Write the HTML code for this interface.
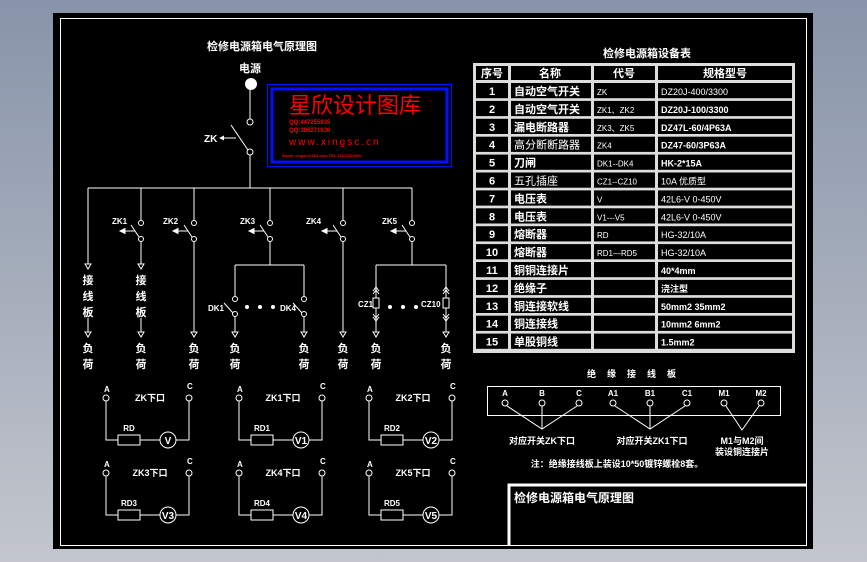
<!DOCTYPE html>
<html><head><meta charset="utf-8"><style>
html,body{margin:0;padding:0;width:867px;height:562px;overflow:hidden;background:linear-gradient(#8794a9,#c3c6cd);}
svg{position:absolute;left:0;top:0}
text{font-family:"Liberation Sans","Noto Sans CJK SC",sans-serif;fill:#fff;font-weight:bold}
</style></head><body>
<svg width="867" height="562" viewBox="0 0 867 562">
<defs>
<g id="arr"><path d="M-3,-3 L3,-3 L0,2 Z" fill="none" stroke="#fff" stroke-width="1"/></g>
<g id="sw" stroke="#fff" fill="none" stroke-width="1">
<circle cx="0" cy="0" r="2.5"/><circle cx="0" cy="16" r="2.5"/>
<line x1="-10" y1="2" x2="-2" y2="14"/><line x1="-20" y1="8" x2="-6" y2="8"/>
<path d="M-21,8 L-16,5.5 L-16,10.5Z" fill="#fff"/>
</g>
</defs>
<rect x="53" y="13" width="760" height="536" fill="#000"/>
<rect x="60.5" y="18.5" width="746" height="527" fill="none" stroke="#fff" stroke-width="1"/>

<text x="262" y="50" font-size="11" text-anchor="middle">检修电源箱电气原理图</text>
<text x="250" y="72" font-size="11" text-anchor="middle">电源</text>
<circle cx="251" cy="84" r="6" fill="#fff"/>
<g stroke="#fff" fill="none" stroke-width="1">
<line x1="250" y1="90" x2="250" y2="119"/>
<circle cx="250" cy="122" r="3"/><circle cx="250" cy="152" r="3"/>
<line x1="231" y1="125" x2="248" y2="150"/>
<line x1="222" y1="138" x2="236" y2="138"/>
<line x1="250" y1="155" x2="250" y2="188"/>
<line x1="88" y1="188" x2="412" y2="188"/>
<line x1="88" y1="188" x2="88" y2="264"/>
<line x1="141" y1="188" x2="141" y2="220"/>
<line x1="194" y1="188" x2="194" y2="220"/>
<line x1="270" y1="188" x2="270" y2="220"/>
<line x1="343" y1="188" x2="343" y2="220"/>
<line x1="412" y1="188" x2="412" y2="220"/>
<line x1="141" y1="242" x2="141" y2="264"/>
<line x1="88" y1="318" x2="88" y2="332"/><line x1="141" y1="318" x2="141" y2="332"/>
<line x1="194" y1="242" x2="194" y2="332"/>
<line x1="343" y1="242" x2="343" y2="332"/>
<line x1="270" y1="242" x2="270" y2="265"/>
<line x1="235" y1="265" x2="304" y2="265"/>
<line x1="235" y1="265" x2="235" y2="297"/><line x1="304" y1="265" x2="304" y2="297"/>
<line x1="235" y1="316" x2="235" y2="332"/><line x1="304" y1="316" x2="304" y2="332"/>
<line x1="412" y1="242" x2="412" y2="265"/>
<line x1="376" y1="265" x2="446" y2="265"/>
<line x1="376" y1="265" x2="376" y2="332"/><line x1="446" y1="265" x2="446" y2="332"/>
<circle cx="235" cy="299" r="2.5"/><circle cx="235" cy="314" r="2.5"/>
<circle cx="304" cy="299" r="2.5"/><circle cx="304" cy="314" r="2.5"/>
<line x1="224" y1="303" x2="233" y2="313"/><line x1="293" y1="303" x2="302" y2="313"/>
<rect x="373" y="298" width="6" height="10" fill="#000"/><rect x="443" y="298" width="6" height="10" fill="#000"/>
<path d="M373,291 L376,287 L379,291 M373,294 L376,290 L379,294"/>
<path d="M443,291 L446,287 L449,291 M443,294 L446,290 L449,294"/>
<path d="M373,314 L376,318 L379,314 M373,317 L376,321 L379,317"/>
<path d="M443,314 L446,318 L449,314 M443,317 L446,321 L449,317"/>
</g>
<path d="M219,138 L224,135.5 L224,140.5Z" fill="#fff"/>
<text x="204" y="142" font-size="10">ZK</text>
<use href="#sw" x="141" y="223"/><use href="#sw" x="194" y="223"/><use href="#sw" x="270" y="223"/><use href="#sw" x="343" y="223"/><use href="#sw" x="412" y="223"/>
<g font-size="8"><text x="112" y="224">ZK1</text><text x="163" y="224">ZK2</text><text x="240" y="224">ZK3</text><text x="306" y="224">ZK4</text><text x="382" y="224">ZK5</text>
<text x="208" y="311">DK1</text><text x="280" y="311">DK4</text><text x="358" y="307">CZ1</text><text x="421" y="307">CZ10</text></g>
<g fill="#fff"><circle cx="247" cy="307" r="2"/><circle cx="260" cy="307" r="2"/><circle cx="273" cy="307" r="2"/>
<circle cx="390" cy="307" r="2"/><circle cx="403" cy="307" r="2"/><circle cx="416" cy="307" r="2"/></g>
<use href="#arr" x="88" y="267"/><use href="#arr" x="141" y="267"/>
<use href="#arr" x="88" y="335"/><use href="#arr" x="141" y="335"/><use href="#arr" x="194" y="335"/><use href="#arr" x="235" y="335"/><use href="#arr" x="304" y="335"/><use href="#arr" x="343" y="335"/><use href="#arr" x="376" y="335"/><use href="#arr" x="446" y="335"/>
<g font-size="11" text-anchor="middle">
<text x="88" y="284">接</text><text x="88" y="300">线</text><text x="88" y="316">板</text>
<text x="141" y="284">接</text><text x="141" y="300">线</text><text x="141" y="316">板</text>
<text x="88" y="352">负</text><text x="88" y="368">荷</text><text x="141" y="352">负</text><text x="141" y="368">荷</text>
<text x="194" y="352">负</text><text x="194" y="368">荷</text><text x="235" y="352">负</text><text x="235" y="368">荷</text>
<text x="304" y="352">负</text><text x="304" y="368">荷</text><text x="343" y="352">负</text><text x="343" y="368">荷</text>
<text x="376" y="352">负</text><text x="376" y="368">荷</text><text x="446" y="352">负</text><text x="446" y="368">荷</text>
</g>

<g id="mb">
<g stroke="#fff" fill="none" stroke-width="1">
<circle cx="106" cy="398" r="3"/><circle cx="189" cy="398" r="3"/>
<path d="M106,401 V440 H118 M140,440 H160 M176,440 H189 V401"/>
<rect x="118" y="435" width="22" height="10"/><circle cx="168" cy="440" r="8"/>
</g>
<text x="104" y="392" font-size="8">A</text><text x="187" y="389" font-size="8">C</text>
</g>
<use href="#mb" x="133" y="0"/><use href="#mb" x="263" y="0"/>
<use href="#mb" x="0" y="75"/><use href="#mb" x="133" y="75"/><use href="#mb" x="263" y="75"/>
<g font-size="9" text-anchor="middle">
<text x="150" y="401">ZK下口</text><text x="283" y="401">ZK1下口</text><text x="413" y="401">ZK2下口</text>
<text x="150" y="476">ZK3下口</text><text x="283" y="476">ZK4下口</text><text x="413" y="476">ZK5下口</text>
<text x="129" y="431" font-size="8">RD</text><text x="262" y="431" font-size="8">RD1</text><text x="392" y="431" font-size="8">RD2</text>
<text x="129" y="506" font-size="8">RD3</text><text x="262" y="506" font-size="8">RD4</text><text x="392" y="506" font-size="8">RD5</text>
<text x="168" y="444" font-size="10">V</text><text x="301" y="444" font-size="10">V1</text><text x="431" y="444" font-size="10">V2</text>
<text x="168" y="519" font-size="10">V3</text><text x="301" y="519" font-size="10">V4</text><text x="431" y="519" font-size="10">V5</text>
</g>

<rect x="267.5" y="84.5" width="184" height="82" fill="none" stroke="#0010ff" stroke-width="1"/>
<rect x="272" y="89" width="175" height="73" fill="none" stroke="#0010ff" stroke-width="3"/>
<text x="289" y="113" font-size="22" style="fill:#f00;font-weight:normal">星欣设计图库</text>
<text x="289" y="124" font-size="6" style="fill:#f00">QQ:447255935</text>
<text x="289" y="132" font-size="6" style="fill:#f00">QQ:396271936</text>
<text x="289" y="145" font-size="10" style="fill:#f00;font-weight:normal;letter-spacing:2px">www.xingsc.cn</text>
<text x="282" y="157" font-size="4" style="fill:#f00">Email: xingsc@163.com  TEL 15111642000</text>

<text x="647" y="57" font-size="11" text-anchor="middle">检修电源箱设备表</text>
<rect x="473" y="63" width="322" height="290" fill="#ddd"/>
<g fill="#000">
<rect x="476" y="66" width="32" height="14"/><rect x="511" y="66" width="80" height="14"/><rect x="594" y="66" width="61" height="14"/><rect x="658" y="66" width="134" height="14"/>
</g>
<g id="rows"></g>
<script>
(function(){var ns="http://www.w3.org/2000/svg",g=document.getElementById("rows");
var data=[["1","自动空气开关","ZK","DZ20J-400/3300"],["2","自动空气开关","ZK1、ZK2","DZ20J-100/3300"],["3","漏电断路器","ZK3、ZK5","DZ47L-60/4P63A"],["4","高分断断路器","ZK4","DZ47-60/3P63A"],["5","刀闸","DK1--DK4","HK-2*15A"],["6","五孔插座","CZ1--CZ10","10A  优质型"],["7","电压表","V","42L6-V  0-450V"],["8","电压表","V1---V5","42L6-V  0-450V"],["9","熔断器","RD","HG-32/10A"],["10","熔断器","RD1—RD5","HG-32/10A"],["11","铜铜连接片","","40*4mm"],["12","绝缘子","","浇注型"],["13","铜连接软线","","50mm2  35mm2"],["14","铜连接线","","10mm2  6mm2"],["15","单股铜线","","1.5mm2"]];
var xs=[[476,32],[511,80],[594,61],[658,134]];
function t(x,y,s,sz,a,w){var e=document.createElementNS(ns,"text");e.setAttribute("x",x);e.setAttribute("y",y);e.setAttribute("font-size",sz);if(a)e.setAttribute("text-anchor",a);if(w)e.style.fontWeight="normal";e.textContent=s;g.appendChild(e);}
t(492,77,"序号",11,"middle");t(550,77,"名称",11,"middle");t(624,77,"代号",11,"middle");t(725,77,"规格型号",11,"middle");
for(var i=0;i<15;i++){var y=83+i*17.9;
for(var j=0;j<4;j++){var r=document.createElementNS(ns,"rect");r.setAttribute("x",xs[j][0]);r.setAttribute("y",y);r.setAttribute("width",xs[j][1]);r.setAttribute("height",15.2);r.setAttribute("fill","#000");g.appendChild(r);}
var b=y+12;t(492,b,data[i][0],11,"middle");t(514,b,data[i][1],11,null,i==3||i==5);t(597,b,data[i][2],8,null,true);t(661,b,data[i][3],9,null,i<2&&i!=1||i>=5&&i<10&&i!=4);}
})();
</script>

<text x="637" y="377" font-size="9" text-anchor="middle" style="letter-spacing:11px">绝缘接线板</text>
<rect x="487.5" y="386.5" width="293" height="29" fill="none" stroke="#fff"/>
<g font-size="8" text-anchor="middle">
<text x="505" y="396">A</text><text x="542" y="396">B</text><text x="579" y="396">C</text><text x="613" y="396">A1</text><text x="650" y="396">B1</text><text x="687" y="396">C1</text><text x="724" y="396">M1</text><text x="761" y="396">M2</text>
</g>
<g stroke="#fff" fill="none" stroke-width="1">
<circle cx="505" cy="403" r="3"/><circle cx="542" cy="403" r="3"/><circle cx="579" cy="403" r="3"/><circle cx="613" cy="403" r="3"/><circle cx="650" cy="403" r="3"/><circle cx="687" cy="403" r="3"/><circle cx="724" cy="403" r="3"/><circle cx="761" cy="403" r="3"/>
<path d="M507,406 L542,429 L577,406 M542,406 V429 M615,406 L650,429 L685,406 M650,406 V429 M726,406 L742,430 L759,406"/>
</g>
<g font-size="9" text-anchor="middle">
<text x="542" y="444">对应开关ZK下口</text><text x="652" y="444">对应开关ZK1下口</text>
<text x="742" y="444">M1与M2间</text><text x="742" y="455">装设铜连接片</text>
<text x="617" y="467">注：绝缘接线板上装设10*50镀锌螺栓8套。</text>
</g>

<path d="M509,545 V485 H807" stroke="#fff" stroke-width="3" fill="none"/>
<text x="514" y="502" font-size="12">检修电源箱电气原理图</text>
</svg>
</body></html>
